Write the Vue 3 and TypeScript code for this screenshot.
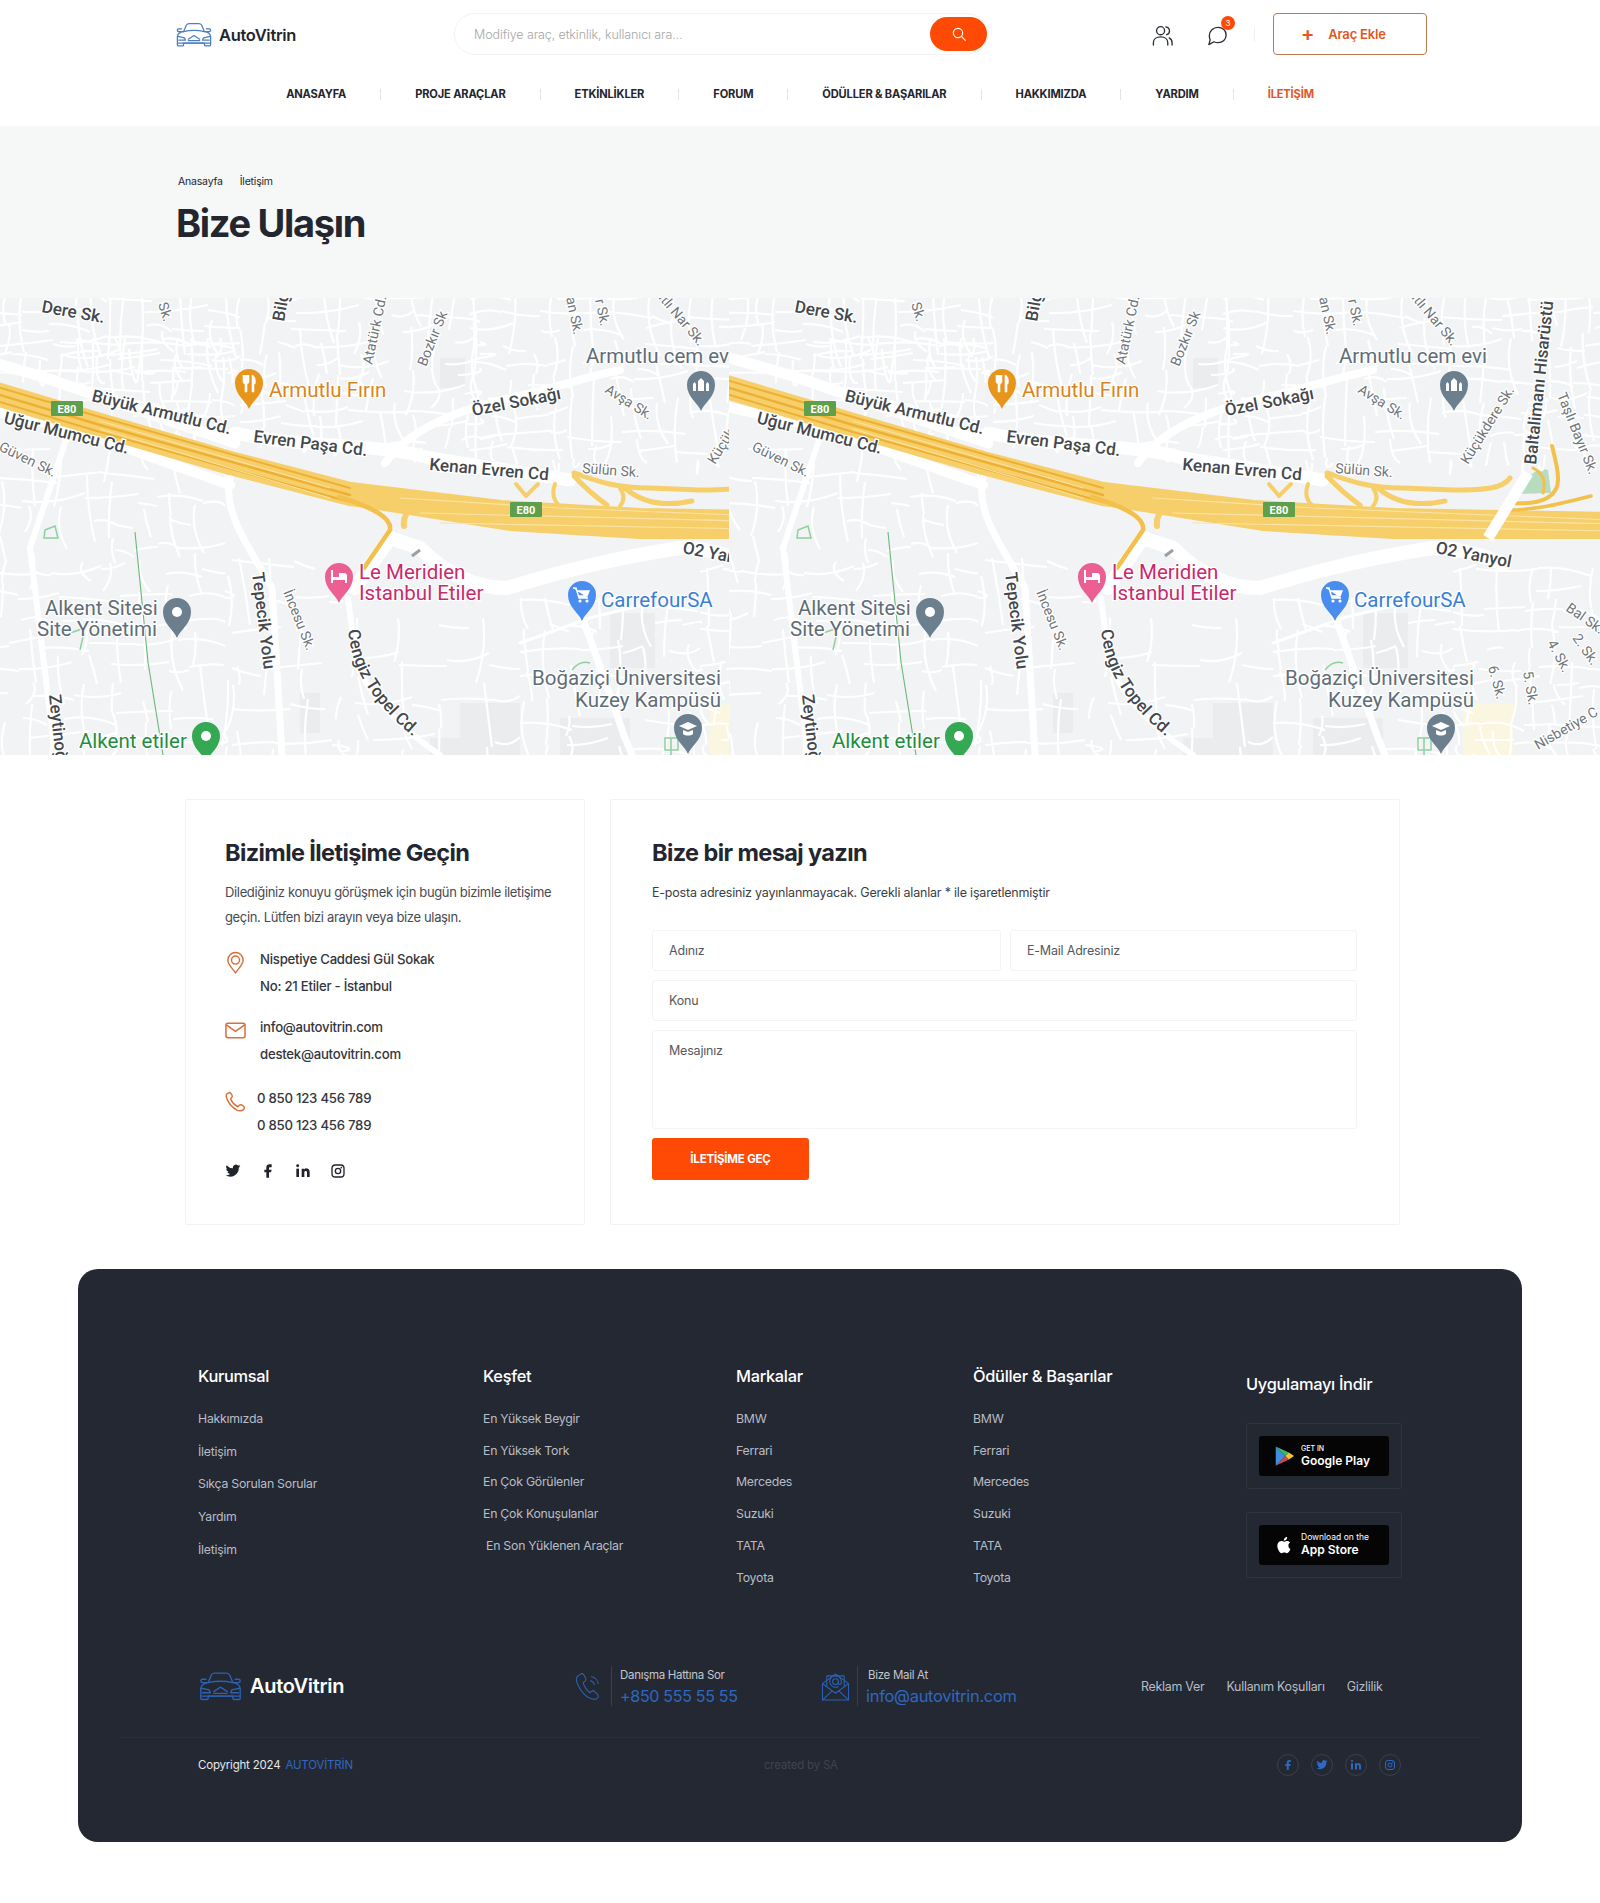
<template>
	<div class="page">
		<header class="top">
			<div class="top-row">
				<a class="logo">
					<svg class="car" viewBox="0 0 40 26" fill="none" stroke="currentColor" stroke-width="1.3" stroke-linejoin="round" stroke-linecap="round">
						<path :d="carPath" />
						<path :d="carDetail" />
					</svg>
					<span>AutoVitrin</span>
				</a>
				<div class="search">
					<input type="text" placeholder="Modifiye araç, etkinlik, kullanıcı ara..." />
					<button class="search-btn" type="button">
						<svg viewBox="0 0 24 24" width="16" height="16" fill="none" stroke="#fff" stroke-width="1.7" stroke-linecap="round"><circle cx="10.5" cy="10.5" r="7" /><path d="M16 16l5.5 5.5" /></svg>
					</button>
				</div>
				<div class="top-actions">
					<svg class="tico" viewBox="0 0 24 24" fill="none" stroke="#2b2f38" stroke-width="1.4" stroke-linecap="round">
						<circle cx="10" cy="7" r="4.2" />
						<path d="M2.5 22v-2.5c0-3.5 3-6 7.500-6s7.500 2.500 7.500 6V22" />
						<path d="M15.500 3c2.500.5 3.800 2.200 3.800 4.200 0 2-1.300 3.400-3 4M19 14.500c1.800 1 3 2.800 3 5V22" />
					</svg>
					<div class="chat">
						<svg class="tico" viewBox="0 0 24 24" fill="none" stroke="#2b2f38" stroke-width="1.4" stroke-linejoin="round">
							<path d="M12.500 3.500c5 0 8.500 3.500 8.500 8s-3.500 8-8.500 8c-1.500 0-3-.4-4.200-1L3 21.500l1.300-5C3.500 15 3.500 13.500 3.500 12c0-4.800 4-8.500 9-8.500z" />
						</svg>
						<span class="badge">3</span>
					</div>
					<span class="vsep"></span>
					<button class="add-btn" type="button"><b>+</b><span>Araç Ekle</span></button>
				</div>
			</div>
			<nav class="nav">
				<template v-for="(item, i) in navItems" :key="item">
					<span v-if="i > 0" class="nav-sep"></span>
					<a :class="{ active: item === 'İLETİŞİM' }">{{ item }}</a>
				</template>
			</nav>
		</header>

		<section class="hero">
			<div class="crumbs"><span>Anasayfa</span><span>İletişim</span></div>
			<h1>Bize Ulaşın</h1>
		</section>

		<!-- harita: iki panel, aynı çizim -->
		<section class="maps">
			<div v-for="p in panels" :key="p.id" class="map-panel" :class="p.id">
				<svg class="map-svg" :viewBox="p.box" :width="p.w" height="457">
					<rect x="-40" y="0" width="920" height="457" fill="#f1f3f4" />
					<rect v-for="(b, i) in blocks" :key="'b' + i" :x="b[0]" :y="b[1]" :width="b[2]" :height="b[3]" fill="#eaecee" />
					<path d="M765 196 C775 175 785 170 795 172 L798 195 Z" fill="#b7dcc0" />
					<rect x="710" y="405" width="50" height="52" fill="#fbf6df" />
					<path :d="streets" fill="none" stroke="#fff" stroke-width="2.2" stroke-linejoin="round" />
					<path v-for="(r, i) in mainRoads" :key="'r' + i" :d="r[0] as string" fill="none" stroke="#fff" :stroke-width="r[1]" stroke-linejoin="round" stroke-linecap="round" />
					<path d="M135 234 L148 364 L163 457" fill="none" stroke="#6cb77c" stroke-width="1.1" />
					<path v-for="(g, i) in greens" :key="'g' + i" :d="g" fill="none" stroke="#8fd0a0" stroke-width="1.5" />
					<path v-for="(r, i) in motorway" :key="'m' + i" :d="r[0] as string" fill="none" :stroke="r[2] as string" :stroke-width="r[1]" stroke-linejoin="round" stroke-linecap="round" />
					<path d="M735 240 L775 175" fill="none" stroke="#fff" stroke-width="11" />
					<path d="M420 252 L412 258" fill="none" stroke="#9aa0a6" stroke-width="3" />

					<g v-for="s in shields" :key="s[0]" :transform="`translate(${s[0]} ${s[1]})`">
						<rect width="32" height="15" rx="1" fill="#5f9e4a" />
						<text x="16" y="12" class="shield">E80</text>
					</g>

					<path :id="'cengiz-' + p.id" d="M348 332 C352 375 375 410 430 452" fill="none" />
					<text class="road"><textPath :href="'#cengiz-' + p.id">Cengiz Topel Cd.</textPath></text>

					<text
						v-for="l in roadLabels"
						:key="l.t"
						:class="l.s ? 'road small' : 'road'"
						:transform="`translate(${l.x} ${l.y}) rotate(${l.r})`"
					>{{ l.t }}</text>

					<text v-for="l in placeLabels" :key="l.t" class="place" :x="l.x" :y="l.y" :fill="l.c">{{ l.t }}</text>

					<g v-for="pin in pins" :key="pin.x" :transform="`translate(${pin.x} ${pin.y})`">
						<path d="M0 26 C-3 18 -14 12 -14 0 A14 14 0 1 1 14 0 C14 12 3 18 0 26Z" :fill="pin.c" />
						<circle v-if="pin.k === 'dot'" r="5" fill="#fff" />
						<path v-else-if="pin.k === 'food'" d="M-6 -8v6c0 2 1 3 2 3v8h2V1c1 0 2-1 2-3v-6M-3 -8v6M3 -8c3 1 4 5 3 9H5v8H3z" fill="#fff" stroke="#fff" stroke-width=".6" />
						<path v-else-if="pin.k === 'bed'" d="M-8 6V-7h2v7h6V-4h5c2 0 3 1 3 3v7h-2V3H-6v3z" fill="#fff" />
						<g v-else-if="pin.k === 'cart'">
							<path d="M-9 -7h3l3 10h9M-5 -4H7L5 1H-3.500z" fill="#fff" stroke="#fff" stroke-width="1.400" />
							<circle cx="-2" cy="6" r="1.600" fill="#fff" />
							<circle cx="5" cy="6" r="1.600" fill="#fff" />
						</g>
						<path v-else-if="pin.k === 'hall'" d="M-8 6V-1l1.500-2L-5 -1v7zM-3 6V-4l3-3 3 3V6zM5 6V-1l1.500-2L8 -1v7z" fill="#fff" />
						<path v-else d="M-9 -2L0 -6l9 4-9 4zM-5 2v4c3 2 7 2 10 0V2L0 4z" fill="#fff" />
					</g>
				</svg>
			</div>
		</section>

		<section class="contact">
			<div class="card card-info">
				<h2>Bizimle İletişime Geçin</h2>
				<p class="lead">Dilediğiniz konuyu görüşmek için bugün bizimle iletişime geçin. Lütfen bizi arayın veya bize ulaşın.</p>
				<div class="info-row">
					<svg class="info-ico" viewBox="0 0 20 24" fill="none" stroke="#d9703a" stroke-width="1.5">
						<path d="M10 23C8 19 2 15 2 9.500a8 8 0 0 1 16 0C18 15 12 19 10 23z" stroke-linejoin="round" />
						<circle cx="10" cy="9.500" r="4.200" />
					</svg>
					<div><div>Nispetiye Caddesi Gül Sokak</div><div>No: 21 Etiler - İstanbul</div></div>
				</div>
				<div class="info-row mail">
					<svg class="info-ico" viewBox="0 0 22 18" fill="none" stroke="#d9703a" stroke-width="1.6" stroke-linejoin="round">
						<rect x="1" y="1.500" width="20" height="15" rx="2" />
						<path d="M1.500 3l9.500 7 9.500-7" />
					</svg>
					<div><div>info@autovitrin.com</div><div>destek@autovitrin.com</div></div>
				</div>
				<div class="info-row phone">
					<svg class="info-ico" viewBox="0 0 22 22" fill="none" stroke="#d9703a" stroke-width="1.5" stroke-linejoin="round">
						<path d="M5 1.500L2 3c-1 1-.8 3 .2 5.500 2 5 6 9 10.300 11.500 2.500 1 5 1 7-.5 1-1.200 1-3-.5-4-1.500-1-3-1.500-4-.5l-1.500 1.500C10.500 15 7 11 5.800 8l1.500-1.500c.5-1 0-2.500-.8-3.500z" />
					</svg>
					<div><div>0 850 123 456 789</div><div>0 850 123 456 789</div></div>
				</div>
				<div class="socials">
					<svg v-for="s in socialIcons" :key="s.k" viewBox="0 0 24 24" class="soc" v-html="s.svg"></svg>
				</div>
			</div>
			<form class="card card-form" @submit.prevent>
				<h2>Bize bir mesaj yazın</h2>
				<p class="note">E-posta adresiniz yayınlanmayacak. Gerekli alanlar * ile işaretlenmiştir</p>
				<div class="fields">
					<input placeholder="Adınız" />
					<input placeholder="E-Mail Adresiniz" />
					<input class="wide" placeholder="Konu" />
					<textarea class="wide" placeholder="Mesajınız"></textarea>
				</div>
				<button class="send" type="submit">İLETİŞİME GEÇ</button>
			</form>
		</section>

		<footer class="footer">
			<div class="columns">
				<div v-for="col in footerCols" :key="col.title" class="col" :class="{ tall: col.tall }">
					<h4>{{ col.title }}</h4>
					<a v-for="(link, i) in col.links" :key="i" :class="{ nudge: link.startsWith('En Son') }">{{ link }}</a>
				</div>
				<div class="col-app">
					<h4>Uygulamayı İndir</h4>
					<div class="store-box">
						<div class="store">
							<svg viewBox="0 0 24 24" width="21" height="24">
								<path d="M2 1v22l11-11z" fill="#3f8fdc" />
								<path d="M2 1l11 11 4-4z" fill="#3fb56b" />
								<path d="M2 23l11-11 4 4z" fill="#d9434f" />
								<path d="M17 8l-4 4 4 4 6-4z" fill="#f5c02e" />
							</svg>
							<div><small>GET IN</small><strong>Google Play</strong></div>
						</div>
					</div>
					<div class="store-box">
						<div class="store">
							<svg viewBox="0 0 24 24" width="21" height="24" fill="#fff">
								<path d="M16.400 12.600c0-2.300 1.900-3.400 2-3.500-1.100-1.600-2.800-1.800-3.400-1.800-1.400-.1-2.800.9-3.500.9s-1.900-.8-3.100-.8c-1.600 0-3 .9-3.800 2.300-1.600 2.800-.4 7 1.200 9.300.8 1.100 1.700 2.400 2.900 2.300 1.200 0 1.600-.7 3-.7s1.800.7 3 .7c1.200 0 2-1.100 2.800-2.200.9-1.300 1.200-2.500 1.300-2.600-.1 0-2.400-.9-2.400-3.900zM14.100 5.800c.6-.8 1.100-1.900.9-3-.9 0-2.100.6-2.800 1.400-.6.7-1.100 1.800-1 2.900 1.100.1 2.200-.5 2.900-1.300z" />
							</svg>
							<div><small class="thin">Download on the</small><strong>App Store</strong></div>
						</div>
					</div>
				</div>
			</div>

			<div class="foot-mid">
				<a class="logo logo-foot">
					<svg class="car" viewBox="0 0 40 26" fill="none" stroke="currentColor" stroke-width="1.2" stroke-linejoin="round" stroke-linecap="round">
						<path :d="carPath" />
						<path :d="carDetail" />
					</svg>
					<span>AutoVitrin</span>
				</a>
				<div class="reach">
					<svg viewBox="0 0 30 30" fill="none" stroke="#2c62b4" stroke-width="1.1" stroke-linejoin="round">
						<path d="M6 2L2 5c-1 2 0 7 3 12 3 5 8 10 13 11 2 .5 5 0 6-2 .5-1 0-2-1-3l-3-3c-1-1-2-1-3 0l-1.500 1.500C12 19 9 14 8.500 11l2-1.500c1-1 1-2 .5-3L9 2.500C8 1.500 7 1.500 6 2z" />
						<path d="M16 9c2 .5 3.500 2 4 4M17 5c3.500.5 6.500 3.500 7 7" stroke-linecap="round" />
					</svg>
					<div class="reach-text"><span>Danışma Hattına Sor</span><b>+850 555 55 55</b></div>
				</div>
				<div class="reach reach-mail">
					<svg viewBox="0 0 30 30" fill="none" stroke="#2c62b4" stroke-width="1.1" stroke-linejoin="round">
						<path d="M1.500 12v17h27V12L15 2z" />
						<path d="M1.500 29L12 19M28.500 29L18 19M1.500 12L15 22l13.500-10" />
						<path d="M6 15V4h18v11" />
						<circle cx="15" cy="10" r="3" />
						<path d="M18 10v1.500a1.500 1.500 0 0 0 3 0V10a6 6 0 1 0-3 5" />
					</svg>
					<div class="reach-text"><span>Bize Mail At</span><b>info@autovitrin.com</b></div>
				</div>
				<div class="foot-links"><a>Reklam Ver</a><a>Kullanım Koşulları</a><a>Gizlilik</a></div>
			</div>

			<div class="foot-bottom">
				<div class="copy">Copyright 2024 <a>AUTOVİTRİN</a></div>
				<div class="made">created by SA</div>
				<div class="foot-soc">
					<span v-for="s in footSocials" :key="s.k" class="circle">
						<svg viewBox="0 0 24 24" v-html="s.svg"></svg>
					</span>
				</div>
			</div>
		</footer>
	</div>
</template>

<script setup lang="ts">
const navItems = ['ANASAYFA', 'PROJE ARAÇLAR', 'ETKİNLİKLER', 'FORUM', 'ÖDÜLLER & BAŞARILAR', 'HAKKIMIZDA', 'YARDIM', 'İLETİŞİM']

// araba ikonu, üstte ve altta aynı
const carPath = 'M9 10 L12 3 Q13 1.500 15 1.500 H25 Q27 1.500 28 3 L31 10 M9 10 H4 Q2.500 10 2.500 8.500 T4 7 H7 M31 10 H36 Q37.500 10 37.500 8.500 T36 7 H33 M9 10 Q3 11 2.500 15 V24 Q2.500 25 3.500 25 H8 Q9 25 9 24 V22 H31 V24 Q31 25 32 25 H36.500 Q37.500 25 37.500 24 V15 Q37 11 31 10'
const carDetail = 'M9 10 Q20 7.500 31 10 M3 15 L10 16.500 L11 19 H4 M37 15 L30 16.500 L29 19 H36 M14 18 L20 14 L26 18 M14 19.500 H26 M3 22 H37'

const panels = [
	{ id: 'left', box: '0 0 729 457', w: 729 },
	{ id: 'right', box: '-24 0 871 457', w: 871 },
]

// ara sokaklar: el ile tek tek çizmek yerine sabit tohumla üretiliyor
function makeStreets() {
	let seed = 71
	const rnd = () => {
		seed = (seed * 1103515245 + 12345) % 2147483648
		return seed / 2147483648
	}
	const areas = [
		[-30, -5, 240, 85, 17, 15],
		[60, 40, 235, 135, 16, 15],
		[240, -5, 480, 150, 19, 16],
		[470, -5, 860, 165, 20, 17],
		[-30, 150, 225, 460, 28, 24],
		[232, 260, 340, 460, 34, 36],
		[520, 300, 700, 460, 24, 24],
		[700, 270, 860, 460, 19, 19],
		[355, 320, 520, 460, 42, 40],
	]
	let d = ''
	for (const [x0, y0, x1, y1, sx, sy] of areas) {
		for (let x = x0; x < x1; x += sx) {
			let y = y0
			while (y < y1) {
				const len = 18 + rnd() * 50
				const px = x + rnd() * 8
				if (rnd() > 0.25) d += `M${px.toFixed(0)} ${y.toFixed(0)}Q${(px + (rnd() - 0.5) * 14).toFixed(0)} ${(y + len / 2).toFixed(0)} ${(px + (rnd() - 0.4) * 18).toFixed(0)} ${Math.min(y + len, y1).toFixed(0)}`
				y += len
			}
		}
		for (let y = y0; y < y1; y += sy) {
			let x = x0
			while (x < x1) {
				const len = 16 + rnd() * 48
				const py = y + rnd() * 8
				if (rnd() > 0.32) d += `M${x.toFixed(0)} ${py.toFixed(0)}Q${(x + len / 2).toFixed(0)} ${(py + (rnd() - 0.5) * 12).toFixed(0)} ${Math.min(x + len, x1).toFixed(0)} ${(py + (rnd() - 0.5) * 16).toFixed(0)}`
				x += len
			}
		}
	}
	return d
}
const streets = makeStreets()

const blocks = [
	[440, 60, 25, 30],
	[300, 395, 20, 40],
	[460, 405, 60, 52],
	[610, 315, 45, 55],
	[560, 420, 70, 37],
	[430, 440, 40, 17],
]

const mainRoads: [string, number][] = [
	['M-30 58 L40 78 L235 145', 11],
	['M-30 108 L70 130 L230 187', 10],
	['M235 135 C300 150 380 145 430 160 L570 182', 13],
	['M385 165 C410 130 460 110 520 98 C560 88 590 78 620 72', 8],
	['M230 180 C222 215 250 250 272 290 L282 457', 7],
	['M348 300 L356 364 C370 400 400 430 440 457', 6],
	['M355 290 L390 240 L420 250 C450 280 480 290 507 290 C540 280 600 262 680 250 C710 250 730 258 750 266', 14],
	['M582 318 L625 440 L632 457', 7],
	['M70 130 L30 250 L55 457', 6],
	['M520 345 L590 320 L650 305', 3],
]

const motorway: [string, number, string][] = [
	['M-30 88 L100 127 L230 165 L350 196 L500 214 L640 222 L860 226', 24, '#f6cf6b'],
	['M360 198 L510 222 L640 230 L860 230', 22, '#f6cf6b'],
	['M-30 81 L100 119 L350 190', 2, '#eeb033'],
	['M-30 88 L100 127 L350 197', 2.500, '#eeb033'],
	['M-30 95 L100 134 L350 204', 2, '#eeb033'],
	['M100 123 L330 190', 1, '#fbe3a4'],
	['M100 131 L330 200', 1, '#fbe3a4'],
	['M400 200 L560 210 L860 222', 1.200, '#fbe3a4'],
	['M420 215 L860 226', 1.200, '#fbe3a4'],
	['M440 225 L860 233', 1.200, '#fbe3a4'],
	['M339 199 C375 210 392 220 390 232 L364 270', 4.500, '#f3c04c'],
	['M404 228 C403 218 407 213 415 210', 6, '#f6cf6b'],
	['M574 175 C590 180 610 190 650 190 L700 192 C735 192 750 190 757 180', 5, '#f6cf6b'],
	['M574 178 Q590 195 607 207', 5, '#f6cf6b'],
	['M620 190 Q627 200 620 208', 4, '#f6cf6b'],
	['M625 190 Q650 212 692 203', 5, '#f6cf6b'],
	['M516 186 L526 198 L538 186', 4, '#f6cf6b'],
	['M555 186 Q550 200 560 208', 4, '#f6cf6b'],
	['M760 205 C790 207 806 198 805 180 C805 170 802 160 799 148', 4, '#f3c04c'],
	['M780 170 Q795 178 790 195', 3, '#f3c04c'],
	['M755 212 C785 212 810 205 838 198', 3.500, '#f3c04c'],
]

const greens = ['M45 232 L55 228 L58 240 L44 240 Z', 'M70 335 L85 330 L80 352', 'M572 372 Q580 362 590 365', 'M665 440 H678 V452 H665 Z M671 440 V458', 'M848 322 L855 330']

const shields = [[51, 103], [510, 204]]

const roadLabels = [
	{ t: 'Dere Sk.', x: 41, y: 14, r: 10, s: false },
	{ t: 'Büyük Armutlu Cd.', x: 91, y: 103, r: 13.500, s: false },
	{ t: 'Uğur Mumcu Cd.', x: 3, y: 125, r: 14, s: false },
	{ t: 'Evren Paşa Cd.', x: 253, y: 144, r: 7, s: false },
	{ t: 'Özel Sokağı', x: 473, y: 118, r: -11, s: false },
	{ t: 'Kenan Evren Cd', x: 429, y: 172, r: 5, s: false },
	{ t: 'O2 Yanyol', x: 682, y: 255, r: 11, s: false },
	{ t: 'Tepecik Yolu', x: 252, y: 275, r: 83, s: false },
	{ t: 'Zeytinoğlu', x: 49, y: 397, r: 84, s: false },
	{ t: 'Baltalimanı Hisarüstü', x: 783, y: 167, r: -84, s: false },
	{ t: 'Bilg', x: 284, y: 24, r: -80, s: false },
	{ t: 'Güven Sk.', x: -2, y: 152, r: 26, s: true },
	{ t: 'Sülün Sk.', x: 582, y: 175, r: 4, s: true },
	{ t: 'Avşa Sk.', x: 604, y: 94, r: 32, s: true },
	{ t: 'Atatürk Cd.', x: 372, y: 67, r: -78, s: true },
	{ t: 'Bozkır Sk', x: 426, y: 69, r: -68, s: true },
	{ t: 'Sk.', x: 158, y: 6, r: 72, s: true },
	{ t: 'an Sk.', x: 566, y: 0, r: 78, s: true },
	{ t: 'r Sk.', x: 595, y: 2, r: 78, s: true },
	{ t: 'ıtlı Nar Sk.', x: 658, y: 0, r: 50, s: true },
	{ t: 'Küçükdere Sk.', x: 715, y: 167, r: -58, s: true },
	{ t: 'Taşlı Bayır Sk.', x: 804, y: 97, r: 68, s: true },
	{ t: 'İncesu Sk.', x: 283, y: 294, r: 68, s: true },
	{ t: '6. Sk.', x: 735, y: 369, r: 75, s: true },
	{ t: '5. Sk.', x: 770, y: 374, r: 80, s: true },
	{ t: '4. Sk.', x: 794, y: 345, r: 62, s: true },
	{ t: '2. Sk.', x: 819, y: 340, r: 55, s: true },
	{ t: 'Bal Sk.', x: 812, y: 312, r: 35, s: true },
	{ t: 'Nisbetiye C', x: 785, y: 452, r: -30, s: true },
]

const placeLabels = [
	{ t: 'Armutlu Fırın', x: 269, y: 99, c: '#d9851c' },
	{ t: 'Armutlu cem evi', x: 586, y: 65, c: '#5f6d78' },
	{ t: 'Le Meridien', x: 359, y: 281, c: '#c92a6c' },
	{ t: 'Istanbul Etiler', x: 359, y: 302, c: '#c92a6c' },
	{ t: 'CarrefourSA', x: 601, y: 309, c: '#3b7fd4' },
	{ t: 'Alkent Sitesi', x: 45, y: 317, c: '#5f6d78' },
	{ t: 'Site Yönetimi', x: 37, y: 338, c: '#5f6d78' },
	{ t: 'Alkent etiler', x: 79, y: 450, c: '#1e8e3e' },
	{ t: 'Boğaziçi Üniversitesi', x: 532, y: 387, c: '#5f6d78' },
	{ t: 'Kuzey Kampüsü', x: 575, y: 409, c: '#5f6d78' },
]

const pins = [
	{ x: 249, y: 85, c: '#e8951c', k: 'food' },
	{ x: 701, y: 87, c: '#6b7f8f', k: 'hall' },
	{ x: 339, y: 279, c: '#ec5f93', k: 'bed' },
	{ x: 582, y: 297, c: '#4a8df0', k: 'cart' },
	{ x: 177, y: 314, c: '#6b7f8f', k: 'dot' },
	{ x: 206, y: 438, c: '#34a853', k: 'dot' },
	{ x: 688, y: 430, c: '#6b7f8f', k: 'school' },
]

const twitter = '<path fill="currentColor" d="M23 4.500a9 9 0 0 1-2.600.7 4.500 4.500 0 0 0 2-2.500 9 9 0 0 1-2.900 1.100A4.500 4.500 0 0 0 11.800 8 12.800 12.800 0 0 1 2.500 3.300 4.500 4.500 0 0 0 3.900 9.300 4.500 4.500 0 0 1 1.800 8.800 4.500 4.500 0 0 0 5.400 13.200a4.500 4.500 0 0 1-2 .1 4.500 4.500 0 0 0 4.200 3.100A9 9 0 0 1 1 18.300 12.800 12.800 0 0 0 20.700 7c.9-.7 1.700-1.500 2.300-2.500z"/>'
const facebook = '<path fill="currentColor" d="M17.500 2h-3a5 5 0 0 0-5 5v3h-3v4h3v8h4v-8h3l1-4h-4V7.200a1 1 0 0 1 1-1h3z"/>'
const linkedin = '<path fill="currentColor" d="M16 8a6 6 0 0 1 6 6v7h-4v-7a2 2 0 0 0-4 0v7h-4V8.500h4V10a6 6 0 0 1 2-2z"/><rect fill="currentColor" x="2" y="8.500" width="4" height="12.500"/><circle fill="currentColor" cx="4" cy="4" r="2.200"/>'
const instagram = '<rect x="3" y="3" width="18" height="18" rx="5" fill="none" stroke="currentColor" stroke-width="2"/><circle cx="12" cy="12" r="4" fill="none" stroke="currentColor" stroke-width="2"/><circle cx="17" cy="7" r="1.200" fill="currentColor"/>'

const socialIcons = [
	{ k: 'tw', svg: twitter },
	{ k: 'fb', svg: facebook },
	{ k: 'in', svg: linkedin },
	{ k: 'ig', svg: instagram },
]
const footSocials = [
	{ k: 'fb', svg: facebook },
	{ k: 'tw', svg: twitter },
	{ k: 'in', svg: linkedin },
	{ k: 'ig', svg: instagram },
]

const brands = ['BMW', 'Ferrari', 'Mercedes', 'Suzuki', 'TATA', 'Toyota']
const footerCols = [
	{ title: 'Kurumsal', tall: true, links: ['Hakkımızda', 'İletişim', 'Sıkça Sorulan Sorular', 'Yardım', 'İletişim'] },
	{ title: 'Keşfet', tall: false, links: ['En Yüksek Beygir', 'En Yüksek Tork', 'En Çok Görülenler', 'En Çok Konuşulanlar', 'En Son Yüklenen Araçlar'] },
	{ title: 'Markalar', tall: false, links: brands },
	{ title: 'Ödüller & Başarılar', tall: false, links: brands },
]
</script>

<style>
html,
body {
	margin: 0;
	background: #fff;
}
</style>

<style scoped>
.page {
	font-family: Inter, "Liberation Sans", sans-serif;
	color: #23262f;
	height: 1903px;
	overflow: hidden;
	background: #fff;
}

a {
	color: inherit;
	text-decoration: none;
}

/* üst bar */
.top {
	height: 126px;
	box-sizing: border-box;
}
.top-row {
	display: flex;
	align-items: center;
	height: 68px;
	padding-left: 175px;
}
.logo {
	display: flex;
	align-items: center;
	gap: 6px;
	width: 279px;
	font-size: 16.500px;
	font-weight: 600;
	letter-spacing: -0.3px;
	margin-top: 1px;
}
.logo .car {
	width: 38px;
	height: 25px;
	color: #4c7fbe;
}
.search {
	width: 534px;
	height: 42px;
	box-sizing: border-box;
	border: 1px solid #f3f3f3;
	border-radius: 21px;
	display: flex;
	align-items: center;
	padding: 0 0 0 17px;
}
.search input {
	flex: 1;
	border: 0;
	outline: 0;
	font: 300 12.500px Inter, sans-serif;
	background: transparent;
	letter-spacing: -0.1px;
}
.search input::placeholder {
	color: #a6a6a6;
}
.search-btn {
	width: 57px;
	height: 34px;
	border: 0;
	border-radius: 17px;
	background: #ff4a05;
	display: flex;
	align-items: center;
	justify-content: center;
}
.top-actions {
	display: flex;
	align-items: center;
	margin-left: 163px;
}
.tico {
	width: 23px;
	height: 23px;
	display: block;
	margin-top: 3px;
}
.chat {
	position: relative;
	margin-left: 32px;
}
.badge {
	position: absolute;
	top: -5px;
	right: -6px;
	width: 14px;
	height: 14px;
	border-radius: 50%;
	background: #ff4a05;
	color: #fff;
	font-size: 8px;
	line-height: 14px;
	text-align: center;
}
.vsep {
	width: 1px;
	height: 15px;
	background: #f0f0f0;
	margin: 0 18px 0 25px;
}
.add-btn {
	width: 154px;
	height: 42px;
	box-sizing: border-box;
	border: 1px solid #bb7b50;
	border-radius: 4px;
	background: #fff;
	color: #e2571e;
	display: flex;
	align-items: center;
	padding: 0 0 0 27px;
	gap: 14px;
	font: 600 13px Inter, sans-serif;
	letter-spacing: -0.2px;
}
.add-btn b {
	font-size: 20px;
	font-weight: 600;
	line-height: 1;
}
.nav {
	display: flex;
	align-items: center;
	justify-content: center;
	margin-top: 19px;
	font-size: 11.100px;
	font-weight: 700;
	letter-spacing: -0.15px;
}
.nav-sep {
	width: 1px;
	height: 11px;
	background: #e4e4e4;
	margin: 0 34px;
}
.nav .active {
	color: #e2571e;
}

/* başlık alanı */
.hero {
	height: 172px;
	box-sizing: border-box;
	background: #f6f7f7;
	padding: 49px 0 0 176px;
}
.crumbs {
	display: flex;
	gap: 17px;
	font-size: 10.500px;
	letter-spacing: -0.2px;
	padding-left: 2px;
	line-height: 13px;
}
.hero h1 {
	margin: 13px 0 0;
	font-size: 38px;
	line-height: 44px;
	font-weight: 700;
	letter-spacing: -1.300px;
}

/* harita */
.maps {
	display: flex;
	height: 457px;
	overflow: hidden;
}
.map-panel {
	flex: none;
	overflow: hidden;
}
.map-svg {
	display: block;
}
.road {
	font: 500 17.100px Roboto, sans-serif;
	fill: #44484c;
	stroke: #fff;
	stroke-width: 2.500px;
	paint-order: stroke;
}
.road.small {
	font-size: 14px;
	font-weight: 400;
	fill: #70757a;
}
.place {
	font: 400 20.500px Roboto, sans-serif;
	stroke: #fff;
	stroke-width: 2.500px;
	paint-order: stroke;
}
.shield {
	font: 700 11px Roboto, sans-serif;
	fill: #fff;
	text-anchor: middle;
}

/* iletişim */
.contact {
	display: flex;
	gap: 25px;
	margin: 44px 0 0 185px;
}
.card {
	box-sizing: border-box;
	height: 426px;
	border: 1px solid #f3f3f4;
	border-radius: 2px;
}
.card-info {
	width: 400px;
	padding: 39px 30px 0 39px;
}
.card-form {
	width: 790px;
	padding: 39px 41px 0 41px;
}
.card h2 {
	margin: 0;
	font-size: 23.500px;
	line-height: 28px;
	font-weight: 700;
	letter-spacing: -0.6px;
}
.lead {
	margin: 13px 0 0;
	font-size: 13px;
	line-height: 25px;
	color: #474a52;
	letter-spacing: -0.35px;
}
.info-row {
	display: flex;
	margin-top: 16px;
	font-size: 13.200px;
	font-weight: 500;
	line-height: 27px;
	letter-spacing: -0.25px;
	color: #33363d;
}
.info-row.mail {
	margin-top: 14px;
}
.info-row.phone {
	margin-top: 17px;
}
.info-ico {
	flex: none;
	width: 21px;
	height: 23px;
	margin: 5px 14px 0 0;
}
.phone .info-ico {
	margin-right: 11px;
}
.socials {
	display: flex;
	gap: 19px;
	margin: 24px 0 0;
}
.soc {
	width: 16px;
	height: 16px;
	color: #20232a;
}
.note {
	margin: 13px 0 0;
	font-size: 12.500px;
	line-height: 25px;
	color: #3b3e45;
	letter-spacing: -0.2px;
}
.fields {
	display: grid;
	grid-template-columns: 349px 347px;
	column-gap: 9px;
	row-gap: 9px;
	margin-top: 25px;
}
.fields input,
.fields textarea {
	box-sizing: border-box;
	height: 41px;
	border: 1px solid #f4f4f5;
	border-radius: 3px;
	outline: 0;
	padding: 0 16px;
	font: 400 12.500px Inter, sans-serif;
	letter-spacing: -0.2px;
	resize: none;
	display: block;
}
.fields input::placeholder,
.fields textarea::placeholder {
	color: #55585f;
	opacity: 1;
}
.fields .wide {
	grid-column: 1 / 3;
	width: 705px;
}
.fields textarea {
	height: 99px;
	padding-top: 12px;
}
.send {
	display: block;
	margin-top: 9px;
	width: 157px;
	height: 42px;
	border: 0;
	border-radius: 3px;
	background: #ff4a05;
	color: #fff;
	font: 700 11.500px Inter, sans-serif;
	letter-spacing: -0.2px;
}

/* alt bilgi */
.footer {
	margin: 44px 78px 0;
	height: 573px;
	box-sizing: border-box;
	background: #232833;
	border-radius: 20px;
	padding: 95px 0 0 120px;
	color: #b9bdc5;
}
.columns {
	display: grid;
	grid-template-columns: 285px 253px 237px 273px 160px;
	height: 263px;
}
.col h4,
.col-app h4 {
	margin: 0;
	color: #fff;
	font-size: 16.400px;
	line-height: 24px;
	font-weight: 500;
	letter-spacing: -0.3px;
}
.col h4 {
	margin-bottom: 15px;
}
.col a {
	display: block;
	font-size: 12.300px;
	line-height: 31.700px;
	letter-spacing: -0.25px;
}
.col.tall a {
	line-height: 32.700px;
}
.col .nudge {
	padding-left: 3px;
}
.col-app {
	padding-top: 8px;
}
.store-box {
	box-sizing: border-box;
	width: 156px;
	height: 66px;
	border: 1px solid #2f3440;
	border-radius: 3px;
	padding: 12px;
	margin-top: 23px;
}
.col-app h4 + .store-box {
	margin-top: 27px;
}
.store {
	height: 40px;
	background: #050505;
	border-radius: 3px;
	display: flex;
	align-items: center;
	gap: 6px;
	padding-left: 15px;
	color: #fff;
}
.store small {
	display: block;
	font-size: 7px;
	line-height: 9px;
	font-weight: 500;
}
.store small.thin {
	font-size: 8.500px;
	font-weight: 400;
}
.store strong {
	display: block;
	font-size: 12px;
	line-height: 15px;
	font-weight: 600;
}
.foot-mid {
	display: flex;
	align-items: center;
	height: 68px;
	margin-top: 25px;
}
.logo-foot {
	color: #fff;
	width: 377px;
	font-size: 20px;
	gap: 7px;
	margin: 0;
}
.logo-foot .car {
	width: 45px;
	height: 30px;
	color: #2c62b4;
}
.reach {
	display: flex;
	align-items: center;
	width: 246px;
}
.reach svg {
	width: 29px;
	height: 29px;
	flex: none;
}
.reach-mail {
	width: 320px;
}
.reach-text {
	display: flex;
	flex-direction: column;
	gap: 5px;
	border-left: 1px solid #3a3f4b;
	margin-left: 7px;
	padding: 2px 0 0 8px;
}
.reach-text span {
	color: #c3c6cc;
	font-size: 11.500px;
	line-height: 14px;
	letter-spacing: -0.3px;
}
.reach-mail .reach-text span {
	padding-left: 2px;
}
.reach-text b {
	font-size: 16px;
	line-height: 19px;
	font-weight: 400;
	color: #2e68c0;
	letter-spacing: -0.3px;
}
.reach-mail .reach-text b {
	font-size: 16.500px;
}
.foot-links {
	display: flex;
	gap: 22px;
	font-size: 12.400px;
	letter-spacing: -0.25px;
}
.foot-bottom {
	margin: 17px 42px 0 -78px;
	border-top: 1px solid #2b2f3a;
	padding: 15px 0 0 78px;
	display: flex;
	align-items: center;
	height: 24px;
	position: relative;
}
.copy {
	width: 566px;
	font-size: 11.500px;
	color: #e6e7ea;
	letter-spacing: -0.2px;
}
.copy a {
	color: #2e68c0;
	margin-left: 2px;
}
.made {
	width: 513px;
	font-size: 11.500px;
	color: #3f444f;
	letter-spacing: -0.2px;
}
.foot-soc {
	display: flex;
	gap: 12px;
}
.circle {
	box-sizing: border-box;
	width: 22px;
	height: 22px;
	border: 1px solid #3a3f4c;
	border-radius: 50%;
	display: flex;
	align-items: center;
	justify-content: center;
	color: #2e68c0;
}
.circle svg {
	width: 12px;
	height: 12px;
}
</style>
